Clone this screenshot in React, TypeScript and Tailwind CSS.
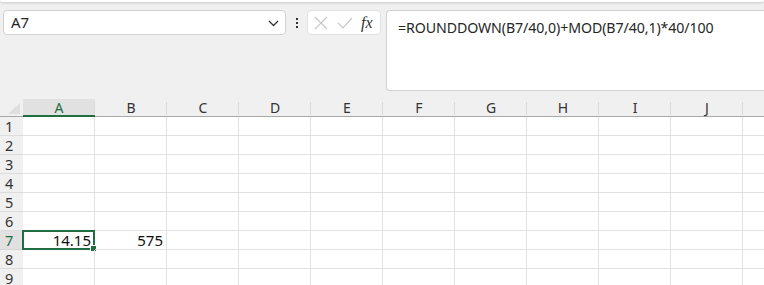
import React from "react";

const cols = ["A", "B", "C", "D", "E", "F", "G", "H", "I", "J", "K"];
const rows = [1, 2, 3, 4, 5, 6, 7, 8, 9];

const values: Record<string, string> = {
  A7: "14.15",
  B7: "575",
};

const font = { fontFamily: '"Noto Sans", "Liberation Sans", sans-serif' };

export default function App() {
  return (
    <div className="w-[764px] h-[285px] overflow-hidden bg-[#f0f0f0] relative" style={font}>
      {/* ribbon edge */}
      <div className="h-[3px] bg-white border-b border-[#d6d6d6] rounded-b-[4px] shadow-[0_1px_2px_rgba(0,0,0,0.08)]" />

      {/* FORMULA BAR ROW */}
      <div className="flex items-start pt-[7px] pl-[3px] h-[96px]">
        <div className="w-[283px] h-[25px] bg-white border border-[#d1d1d1] rounded-[4px] flex items-center justify-between pl-[7px] pr-[6px]">
          <span className="text-[15px] text-[#262626] leading-none">A7</span>
          <svg width="11" height="7" viewBox="0 0 11 7" className="mt-[1px]">
            <path d="M1 1 L5.5 5.5 L10 1" fill="none" stroke="#333" strokeWidth="1.3" />
          </svg>
        </div>
        <div className="w-[21px] h-[25px] flex flex-col items-center justify-center gap-[2px]">
          <span className="w-[2px] h-[2px] bg-[#333]" />
          <span className="w-[2px] h-[2px] bg-[#333]" />
          <span className="w-[2px] h-[2px] bg-[#333]" />
        </div>
        <div className="w-[74px] h-[25px] bg-white border border-[#e0e0e0] rounded-[4px] flex items-center pl-[6px]">
          <svg width="14" height="14" viewBox="0 0 14 14">
            <path d="M1 1 L13 13 M13 1 L1 13" stroke="#c8c8c8" strokeWidth="1.2" />
          </svg>
          <svg width="16" height="12" viewBox="0 0 16 12" className="ml-[9px]">
            <path d="M1 6 L6 11 L15 1" fill="none" stroke="#c8c8c8" strokeWidth="1.2" />
          </svg>
          <span
            className="ml-[8px] text-[16px] italic text-[#333] leading-none"
            style={{ fontFamily: '"Liberation Serif", "DejaVu Serif", serif' }}
          >
            fx
          </span>
        </div>
        <div className="ml-[5px] flex-1 h-[81px] bg-white border border-[#d1d1d1] rounded-l-[4px] border-r-0 pl-[11px] pt-[4px]">
          <span className="text-[14.2px] text-[#262626] tracking-[-0.1px]">
            =ROUNDDOWN(B7/40,0)+MOD(B7/40,1)*40/100
          </span>
        </div>
      </div>

      {/* GRID */}
      <div className="grid grid-cols-[23px_repeat(11,72px)] w-[815px] bg-white">
        {/* header row */}
        <div className="h-[18px] bg-[#f0f0f0] border-b border-[#a8a8a8] flex items-end justify-end pr-[3px] pb-[2px]">
          <svg width="12" height="11" viewBox="0 0 12 11">
            <path d="M12 0 L12 11 L0 11 Z" fill="#dedede" />
          </svg>
        </div>
        {cols.map((c) => (
          <div
            key={c}
            className={`h-[18px] flex items-center justify-center text-[14px] leading-none relative ${
              c === "A"
                ? "bg-[#e1e1e1] border-b-2 border-[#1e6e42] text-[#1e6e42]"
                : "bg-[#f0f0f0] border-b border-[#a8a8a8] text-[#333]"
            }`}
          >
            <span className={c === "A" ? "mt-[1px]" : ""}>{c}</span>
            <span className="absolute right-0 top-[3px] bottom-[1px] w-px bg-[#dadada]" />
          </div>
        ))}

        {rows.map((r) => (
          <React.Fragment key={r}>
            <div
              className={`h-[19px] flex items-center pl-[5px] text-[14.5px] leading-none border-b ${
                r === 7
                  ? "bg-[#e1e1e1] text-[#1e6e42] border-[#d4d4d4]"
                  : "bg-[#f0f0f0] text-[#333] border-[#dcdcdc]"
              }`}
            >
              {r}
            </div>
            {cols.map((c) => {
              const id = `${c}${r}`;
              const selected = id === "A7";
              return (
                <div
                  key={id}
                  className="h-[19px] border-r border-b border-[#e1e1e1] relative flex items-center justify-end pr-[3px] text-[15px] text-[#111] leading-none"
                >
                  {values[id] && <span className="mt-[1px]">{values[id]}</span>}
                  {selected && (
                    <>
                      <span className="absolute left-[-1px] top-[-1px] right-[-1px] bottom-[-1px] border-2 border-[#1e6e42] pointer-events-none" />
                      <span className="absolute right-[-3px] bottom-[-3px] w-[5px] h-[5px] bg-[#1e6e42] border border-white box-content" />
                    </>
                  )}
                </div>
              );
            })}
          </React.Fragment>
        ))}
      </div>
    </div>
  );
}
